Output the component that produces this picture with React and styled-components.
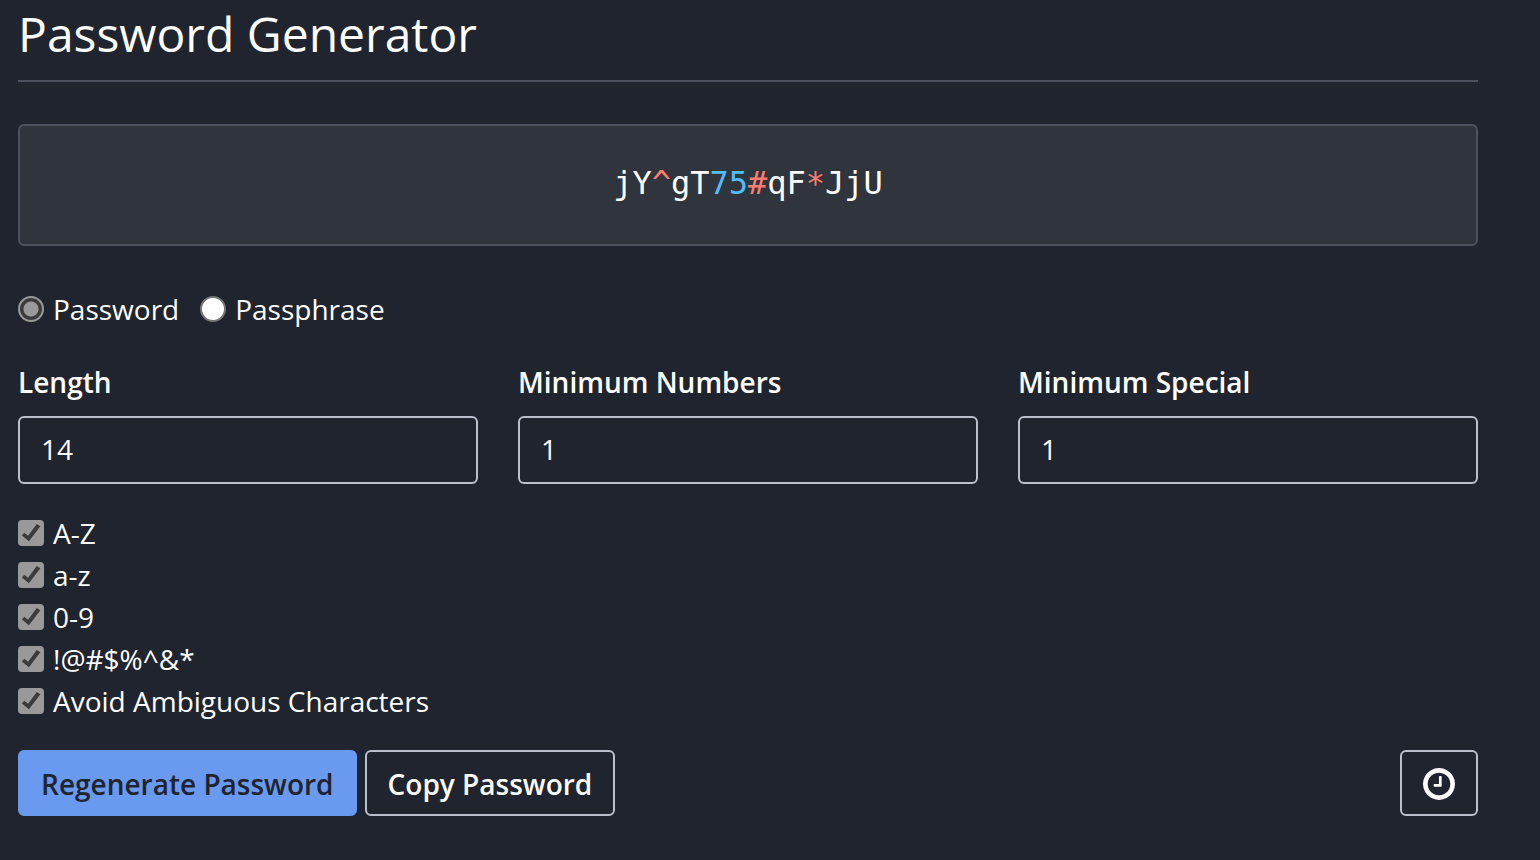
import React, { useState } from "react";
import styled, { createGlobalStyle } from "styled-components";

const GlobalStyle = createGlobalStyle`
  *, *::before, *::after { box-sizing: border-box; }
  body {
    margin: 0;
    background: #1f242e;
    color: #ffffff;
    font-family: "Open Sans", sans-serif;
    font-size: 28px;
    line-height: 42px;
  }
`;

const Page = styled.main`
  padding: 6px 62px 44px 18px;
`;

const Header = styled.header`
  padding-bottom: 18px;
  margin-bottom: 42px;
  border-bottom: 2px solid #4c525f;
`;

const Title = styled.h1`
  margin: 0;
  font-size: 48px;
  font-weight: 400;
  line-height: 56px;
`;

const GeneratedCard = styled.div`
  padding: 36px 40px 40px;
  margin-bottom: 42px;
  border: 2px solid #4c525f;
  border-radius: 6px;
  background: #2f343d;
  font-family: "DejaVu Sans Mono", monospace;
  font-size: 32px;
  line-height: 42px;
  text-align: center;
  overflow-wrap: anywhere;
`;

const charColors = { letter: "#ffffff", number: "#52bdfb", special: "#ff7c70" };

const Char = styled.span`
  color: ${({ $kind }) => charColors[$kind]};
`;

const TypeGroup = styled.div`
  display: flex;
  flex-wrap: wrap;
  gap: 0 21px;
  margin-bottom: 31px;
`;

const Choice = styled.div`
  display: flex;
  align-items: flex-start;
  gap: 9px;
`;

const Radio = styled.input.attrs({ type: "radio" })`
  appearance: none;
  flex: none;
  width: 26px;
  height: 26px;
  margin: 8px 0 0;
  border: 2px solid #767676;
  border-radius: 50%;
  background: #ffffff;

  &:checked {
    border-color: #999999;
    background: radial-gradient(circle, #999999 7px, #3b3b3b 8px);
  }
`;

const Checkbox = styled.input.attrs({ type: "checkbox" })`
  appearance: none;
  flex: none;
  display: grid;
  width: 26px;
  height: 26px;
  margin: 8px 0 0;
  border-radius: 4px;
  background: #ffffff;

  &:checked { background: #999999; }

  &:checked::after {
    content: "";
    background: #3b3b3b;
    clip-path: polygon(15% 60%, 24% 49%, 39% 61%, 72% 15%, 86% 24%, 42% 82%);
  }
`;

const Fields = styled.div`
  display: grid;
  grid-template-columns: repeat(3, minmax(0, 1fr));
  gap: 40px;
  margin-bottom: 28px;
`;

const Field = styled.div`
  display: flex;
  flex-direction: column;
  gap: 13px;
`;

const FieldLabel = styled.label`
  font-weight: 600;
`;

const NumberInput = styled.input.attrs({ type: "number" })`
  appearance: textfield;
  width: 100%;
  height: 68px;
  padding: 0 21px 2px;
  border: 2px solid #bac0ce;
  border-radius: 6px;
  background: #1f242e;
  color: #ffffff;
  font: inherit;

  &::-webkit-inner-spin-button { display: none; }
`;

const Actions = styled.div`
  display: flex;
  align-items: center;
  gap: 8px;
  margin-top: 28px;
`;

const Button = styled.button`
  display: flex;
  align-items: center;
  justify-content: center;
  height: 66px;
  padding: 2px 21px 0;
  border: 2px solid ${({ $primary }) => ($primary ? "#6a99f0" : "#bac0ce")};
  border-radius: 6px;
  background: ${({ $primary }) => ($primary ? "#6a99f0" : "transparent")};
  color: ${({ $primary }) => ($primary ? "#1f242e" : "#ffffff")};
  font: inherit;
  font-weight: 600;
  white-space: nowrap;
  cursor: pointer;
`;

const HistoryButton = styled(Button)`
  margin-left: auto;
`;

const ClockIcon = () => (
  <svg width="32" height="32" viewBox="128 128 1536 1536" fill="currentColor" aria-hidden="true">
    <path d="M1024 544v448q0 14-9 23t-23 9h-320q-14 0-23-9t-9-23v-64q0-14 9-23t23-9h224v-352q0-14 9-23t23-9h64q14 0 23 9t9 23zm416 352q0-148-73-273t-198-198-273-73-273 73-198 198-73 273 73 273 198 198 273 73 273-73 198-198 73-273zm224 0q0 209-103 385.5t-279.5 279.5-385.5 103-385.5-103-279.5-279.5-103-385.5 103-385.5 279.5-279.5 385.5-103 385.5 103 279.5 279.5 103 385.5z" />
  </svg>
);

const password = [
  ["jY", "letter"],
  ["^", "special"],
  ["gT", "letter"],
  ["75", "number"],
  ["#", "special"],
  ["qF", "letter"],
  ["*", "special"],
  ["JjU", "letter"],
];

const types = [
  { id: "password", label: "Password" },
  { id: "passphrase", label: "Passphrase" },
];

const fields = [
  { id: "length", label: "Length", value: 14 },
  { id: "min-number", label: "Minimum Numbers", value: 1 },
  { id: "min-special", label: "Minimum Special", value: 1 },
];

const options = [
  { id: "uppercase", label: "A-Z" },
  { id: "lowercase", label: "a-z" },
  { id: "numbers", label: "0-9" },
  { id: "special", label: "!@#$%^&*" },
  { id: "ambiguous", label: "Avoid Ambiguous Characters" },
];

export default function App() {
  const [type, setType] = useState("password");

  return (
    <>
      <GlobalStyle />
      <Page>
        <Header>
          <Title>Password Generator</Title>
        </Header>
        <GeneratedCard>
          {password.map(([text, kind]) => (
            <Char key={text} $kind={kind}>{text}</Char>
          ))}
        </GeneratedCard>
        <TypeGroup role="radiogroup" aria-label="Type">
          {types.map(({ id, label }) => (
            <Choice key={id}>
              <Radio id={id} name="type" checked={type === id} onChange={() => setType(id)} />
              <label htmlFor={id}>{label}</label>
            </Choice>
          ))}
        </TypeGroup>
        <Fields>
          {fields.map(({ id, label, value }) => (
            <Field key={id}>
              <FieldLabel htmlFor={id}>{label}</FieldLabel>
              <NumberInput id={id} defaultValue={value} />
            </Field>
          ))}
        </Fields>
        {options.map(({ id, label }) => (
          <Choice key={id}>
            <Checkbox id={id} defaultChecked />
            <label htmlFor={id}>{label}</label>
          </Choice>
        ))}
        <Actions>
          <Button type="button" $primary>Regenerate Password</Button>
          <Button type="button">Copy Password</Button>
          <HistoryButton type="button" aria-label="Password History">
            <ClockIcon />
          </HistoryButton>
        </Actions>
      </Page>
    </>
  );
}
